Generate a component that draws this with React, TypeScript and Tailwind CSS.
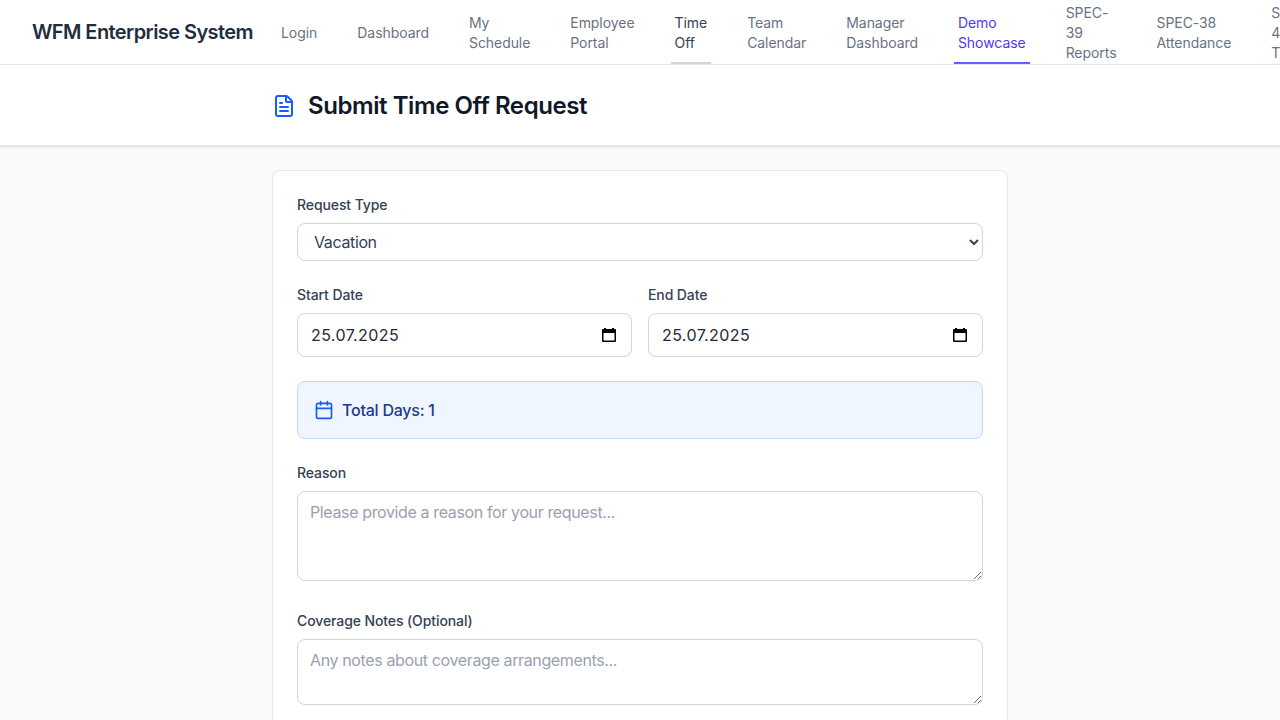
import { Calendar, FileText } from 'lucide-react'

const navItems = [
    { label: 'Login', state: 'idle' },
    { label: 'Dashboard', state: 'idle' },
    { label: 'My Schedule', state: 'idle' },
    { label: 'Employee Portal', state: 'idle' },
    { label: 'Time Off', state: 'hover' },
    { label: 'Team Calendar', state: 'idle' },
    { label: 'Manager Dashboard', state: 'idle' },
    { label: 'Demo Showcase', state: 'active' },
    { label: 'SPEC-39 Reports', state: 'idle' },
    { label: 'SPEC-38 Attendance', state: 'idle' },
    { label: 'SPEC-40 Time', state: 'idle' },
]

const navStyles: Record<string, string> = {
    idle: 'border-transparent text-gray-500',
    hover: 'border-gray-300 text-gray-700',
    active: 'border-indigo-500 text-indigo-600',
}

function Label({ children }: { children: string }) {
    return <label className="block text-sm font-medium tracking-[-0.1px] text-gray-700 mb-2">{children}</label>
}

function DateField({ label, value }: { label: string; value: string }) {
    return (
        <div>
            <Label>{label}</Label>
            <div className="relative">
                <input
                    type="text"
                    readOnly
                    value={value}
                    className="w-full h-11 pl-[13px] pr-3 border border-gray-300 rounded-lg text-gray-800 tracking-[0.4px]"
                />
                <svg className="absolute right-[15px] top-[14px] w-4 h-4" viewBox="0 0 16 16" fill="black">
                    <path d="M3 1h2v1h6V1h2v1h1a1 1 0 0 1 1 1v11a1 1 0 0 1-1 1H2a1 1 0 0 1-1-1V3a1 1 0 0 1 1-1h1V1zM2.5 6v7.5h11V6h-11z" />
                </svg>
            </div>
        </div>
    )
}

export default function App() {
    return (
        <div className="h-screen overflow-hidden bg-slate-50 font-['Inter',sans-serif]">
            {/* Top navigation */}
            <nav className="bg-white border-b border-gray-200">
                <div className="flex h-16 px-8">
                    <div className="flex items-center shrink-0 text-xl font-semibold tracking-[-0.57px] text-[#1f2d3d]">WFM Enterprise System</div>
                    <div className="ml-6 flex gap-8">
                        {navItems.map(item => (
                            <a
                                key={item.label}
                                className={`inline-flex items-center px-1 pt-1 border-b-2 text-sm font-normal tracking-[-0.06px] w-min ${navStyles[item.state]}`}
                            >
                                {item.label}
                            </a>
                        ))}
                    </div>
                </div>
            </nav>

            {/* Page heading */}
            <header className="bg-white border-b border-gray-200 shadow-sm">
                <div className="max-w-3xl mx-auto px-4 pt-[25px] pb-[23px] flex items-center gap-3">
                    <FileText className="w-6 h-6 text-blue-600" />
                    <h1 className="text-2xl font-semibold tracking-[-0.43px] text-gray-900">Submit Time Off Request</h1>
                </div>
            </header>

            {/* Form */}
            <main className="max-w-3xl mx-auto px-4 py-6">
                <div className="bg-white rounded-lg border border-gray-200 p-6">
                    <div className="mb-6">
                        <Label>Request Type</Label>
                        <select defaultValue="vacation" className="w-full h-[38px] px-3 border border-gray-300 rounded-lg text-slate-700 tracking-[-0.37px] bg-white">
                            <option value="vacation">Vacation</option>
                            <option value="sick">Sick Leave</option>
                            <option value="personal">Personal</option>
                        </select>
                    </div>

                    <div className="grid grid-cols-2 gap-4 mb-6">
                        <DateField label="Start Date" value="25.07.2025" />
                        <DateField label="End Date" value="25.07.2025" />
                    </div>

                    <div className="mb-6 p-4 bg-blue-50 border border-blue-200 rounded-lg flex items-center gap-2">
                        <Calendar className="w-5 h-5 text-blue-600" />
                        <span className="font-medium tracking-[-0.23px] text-blue-900">Total Days: 1</span>
                    </div>

                    <div className="mb-6">
                        <Label>Reason</Label>
                        <textarea rows={3} placeholder="Please provide a reason for your request..." className="w-full px-3 py-2 border border-gray-300 rounded-lg tracking-[-0.37px] placeholder:text-gray-400" />
                    </div>

                    <div className="mb-6">
                        <Label>Coverage Notes (Optional)</Label>
                        <textarea rows={2} placeholder="Any notes about coverage arrangements..." className="w-full px-3 py-2 border border-gray-300 rounded-lg tracking-[-0.37px] placeholder:text-gray-400" />
                    </div>
                </div>
            </main>
        </div>
    )
}
